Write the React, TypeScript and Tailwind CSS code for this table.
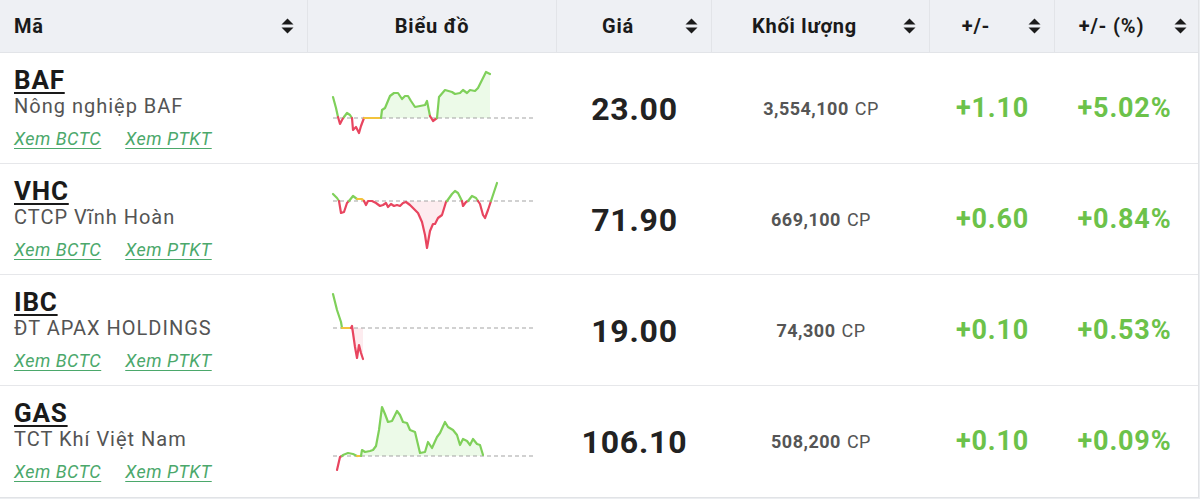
import React from 'react';

type Seg = { c: 'g' | 'r' | 'y'; pts: string };

type Row = {
  code: string;
  name: string;
  price: string;
  volume: string;
  change: string;
  pct: string;
  base: number;
  segs: Seg[];
  fills: { c: 'g' | 'r'; pts: string }[];
};

const COLORS = { g: '#7fd05a', r: '#e8455f', y: '#f3c33c' };
const FILLS = { g: 'rgba(150,230,130,0.18)', r: 'rgba(240,120,140,0.14)' };

const rows: Row[] = [
  {
    code: 'BAF',
    name: 'Nông nghiệp BAF',
    price: '23.00',
    volume: '3,554,100',
    change: '+1.10',
    pct: '+5.02%',
    base: 118,
    segs: [
      { c: 'g', pts: '333,97 336,108 338,117' },
      { c: 'r', pts: '338,117 340,124 342,120 344,117' },
      { c: 'g', pts: '344,117 347,113 350,115 352,118' },
      { c: 'r', pts: '352,118 353,130 356,127 359,133 361,126 364,118' },
      { c: 'y', pts: '364,118 381,118' },
      {
        c: 'g',
        pts: '381,118 382,110 385,108 390,96 394,93 398,93 402,99 405,96 408,96 411,101 415,107 420,106 425,105 427,101 430,116',
      },
      { c: 'r', pts: '430,116 433,121 437,118' },
      {
        c: 'g',
        pts: '437,118 439,97 445,90 452,92 455,94 460,93 463,90 467,93 470,90 475,91 478,88 482,80 486,72 490,74',
      },
    ],
    fills: [
      {
        c: 'g',
        pts: '381,118 382,110 385,108 390,96 394,93 398,93 402,99 405,96 408,96 411,101 415,107 420,106 425,105 427,101 430,116 430,118',
      },
      {
        c: 'g',
        pts: '437,118 439,97 445,90 452,92 455,94 460,93 463,90 467,93 470,90 475,91 478,88 482,80 486,72 490,74 490,118',
      },
    ],
  },
  {
    code: 'VHC',
    name: 'CTCP Vĩnh Hoàn',
    price: '71.90',
    volume: '669,100',
    change: '+0.60',
    pct: '+0.84%',
    base: 201,
    segs: [
      { c: 'g', pts: '333,194 337,198 339,201' },
      { c: 'r', pts: '339,201 341,213 344,212 347,203 349,201' },
      { c: 'g', pts: '349,201 353,196 357,199' },
      { c: 'y', pts: '357,199 362,199 364,201' },
      {
        c: 'r',
        pts: '364,201 366,205 368,201 372,201 376,203 380,206 383,205 386,203 388,207 391,204 394,206 397,205 400,206 403,203 406,202 410,205 413,208 418,213 422,222 425,235 427,248 430,231 433,224 435,224 438,218 442,215 446,202 447,201',
      },
      { c: 'g', pts: '447,201 452,194 455,191 458,193 461,199 462,201' },
      { c: 'r', pts: '462,201 463,206 466,202 468,201' },
      { c: 'g', pts: '468,201 472,196 476,198 478,201' },
      { c: 'r', pts: '478,201 480,204 483,215 485,218 488,210 491,201' },
      { c: 'g', pts: '491,201 494,192 497,183' },
    ],
    fills: [
      {
        c: 'r',
        pts: '406,201 410,205 413,208 418,213 422,222 425,235 427,248 430,231 433,224 435,224 438,218 442,215 446,202 447,201',
      },
    ],
  },
  {
    code: 'IBC',
    name: 'ĐT APAX HOLDINGS',
    price: '19.00',
    volume: '74,300',
    change: '+0.10',
    pct: '+0.53%',
    base: 328,
    segs: [
      { c: 'g', pts: '333,294 337,310 341,322 342,328' },
      { c: 'y', pts: '342,328 351,328' },
      { c: 'r', pts: '351,328 352,326 355,347 357,358 359,345 361,353 363,359' },
    ],
    fills: [{ c: 'r', pts: '351,328 355,347 357,358 359,345 361,353 363,359 363,328' }],
  },
  {
    code: 'GAS',
    name: 'TCT Khí Việt Nam',
    price: '106.10',
    volume: '508,200',
    change: '+0.10',
    pct: '+0.09%',
    base: 456,
    segs: [
      { c: 'r', pts: '337,470 340,457 342,456' },
      { c: 'g', pts: '342,456 343,455 348,453 353,454 357,456' },
      { c: 'y', pts: '357,456 361,456' },
      {
        c: 'g',
        pts: '361,456 362,450 365,452 370,451 373,450 376,446 379,430 382,407 385,414 388,422 392,421 397,411 400,415 403,422 407,423 410,430 415,432 420,453 425,452 428,442 432,448 437,437 440,433 445,422 448,427 453,430 457,435 460,445 463,439 467,441 470,445 473,439 477,444 480,445 483,455',
      },
    ],
    fills: [
      {
        c: 'g',
        pts: '361,456 362,450 365,452 370,451 373,450 376,446 379,430 382,407 385,414 388,422 392,421 397,411 400,415 403,422 407,423 410,430 415,432 420,453 425,452 428,442 432,448 437,437 440,433 445,422 448,427 453,430 457,435 460,445 463,439 467,441 470,445 473,439 477,444 480,445 483,455 483,456',
      },
    ],
  },
];

function SortIcon() {
  return (
    <svg width="13" height="18" viewBox="0 0 13 18" className="shrink-0">
      <path d="M6.5 1.5 L12.5 7.5 H0.5 Z" fill="#1b1b1b" />
      <path d="M6.5 16.5 L12.5 10.5 H0.5 Z" fill="#1b1b1b" />
    </svg>
  );
}

function Sparkline({ row, top }: { row: Row; top: number }) {
  return (
    <svg width="249" height="111" viewBox="0 0 249 111" className="block">
      <g transform={`translate(-308 ${-top})`}>
        {row.fills.map((f, i) => (
          <polygon key={i} points={f.pts} fill={FILLS[f.c]} />
        ))}
        <line
          x1="333"
          x2="533"
          y1={row.base}
          y2={row.base}
          stroke="#a3a3a3"
          strokeWidth="1"
          strokeDasharray="4 3"
        />
        {row.segs.map((s, i) => (
          <polyline
            key={i}
            points={s.pts}
            fill="none"
            stroke={COLORS[s.c]}
            strokeWidth="2.2"
            strokeLinejoin="round"
            strokeLinecap="round"
          />
        ))}
      </g>
    </svg>
  );
}

const cols = 'grid grid-cols-[308px_249px_155px_218px_125px_145px]';

export default function App() {
  return (
    <div
      className="w-[1200px] h-[499px] bg-[#eceef1] overflow-hidden"
      style={{ fontFamily: 'Roboto, "Noto Sans", sans-serif' }}
    >
      <div className="w-[1199px] bg-white border-r border-b border-[#e1e3e6]">
        {/* Header */}
        <div className={`${cols} h-[53px] bg-[#eef0f4] border-b border-[#e2e4e8] text-[20px] font-bold text-[#1a1a1a] tracking-[0.8px]`}>
          <div className="flex items-center pl-[14px] pr-[13px] border-r border-[#e2e4e8]">
            <span className="flex-1">Mã</span>
            <SortIcon />
          </div>
          <div className="flex items-center justify-center border-r border-[#e2e4e8]">Biểu đồ</div>
          {['Giá', 'Khối lượng', '+/-', '+/- (%)'].map((h, i) => (
            <div
              key={h}
              className={`flex items-center pr-[13px] ${i < 3 ? 'border-r border-[#e2e4e8]' : ''}`}
            >
              <span className="flex-1 text-center mr-[6px]">{h}</span>
              <SortIcon />
            </div>
          ))}
        </div>

        {/* Rows */}
        {rows.map((row, idx) => {
          const top = 53 + idx * 111;
          return (
            <div
              key={row.code}
              className={`${cols} h-[111px] ${idx < rows.length - 1 ? 'border-b border-[#e6e7ea]' : ''}`}
            >
              <div className="pl-[14px] pt-[13px]">
                <div className="text-[26px] leading-[28px] font-bold text-[#1a1a1a] tracking-[0.8px] underline decoration-2 underline-offset-[3px]">
                  {row.code}
                </div>
                <div className="text-[20px] leading-[25px] text-[#545454] tracking-[1px]">{row.name}</div>
                <div className="mt-[8px] flex gap-[24px] text-[18px] leading-[24px] italic text-[#4ba86b] tracking-[0.5px] underline underline-offset-[3px]">
                  <span>Xem BCTC</span>
                  <span>Xem PTKT</span>
                </div>
              </div>
              <div>
                <Sparkline row={row} top={top} />
              </div>
              <div className="flex items-center justify-center text-[32px] font-bold text-[#222] tracking-[0.8px]">
                {row.price}
              </div>
              <div className="flex items-center justify-center text-[18px] text-[#555] tracking-[0.5px]">
                <span className="font-bold">{row.volume}</span>
                <span className="ml-[6px]">CP</span>
              </div>
              <div className="flex items-center justify-center text-[27px] font-bold text-[#6cc24a] tracking-[0.8px]">
                {row.change}
              </div>
              <div className="flex items-center justify-center pr-[6px] text-[27px] font-bold text-[#6cc24a] tracking-[0.8px]">
                {row.pct}
              </div>
            </div>
          );
        })}
      </div>
    </div>
  );
}
